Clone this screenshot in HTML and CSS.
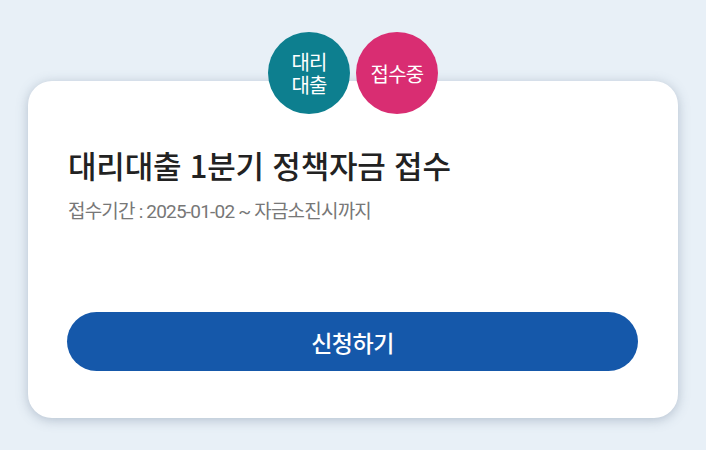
FILE: index.html
```html
<!DOCTYPE html>
<html lang="ko">
<head>
<meta charset="utf-8">
<link rel="stylesheet" href="styles.css">
</head>
<body>
<div class="wrap">
  <div class="card">
    <div class="badges">
      <span class="badge badge-teal">대리<br>대출</span>
      <span class="badge badge-pink">접수중</span>
    </div>
    <h1 class="title">대리대출 1분기 정책자금 접수</h1>
    <p class="period">접수기간 : 2025-01-02 ~ 자금소진시까지</p>
    <button class="apply">신청하기</button>
  </div>
</div>
</body>
</html>
```
FILE: styles.css
```css
html, body {
  margin: 0;
  padding: 0;
  background: #e8f0f7;
  font-family: "Noto Sans CJK KR", "Noto Sans", sans-serif;
}
.wrap {
  padding: 81px 28px 32px;
}
.card {
  position: relative;
  width: 650px;
  height: 337px;
  box-sizing: border-box;
  background: #fff;
  border-radius: 24px;
  box-shadow: 0 2px 12px rgba(80, 100, 130, 0.35);
  padding: 64px 40px 0;
  display: flex;
  flex-direction: column;
}
.badges {
  position: absolute;
  top: -49px;
  left: 0;
  right: 0;
  display: flex;
  justify-content: center;
  gap: 6px;
}
.badge {
  width: 82px;
  height: 82px;
  border-radius: 50%;
  display: flex;
  align-items: center;
  justify-content: center;
  text-align: center;
  color: #fff;
  font-size: 20px;
  line-height: 23px;
  font-weight: 400;
  letter-spacing: -0.8px;
}
.badge-teal { background: #0d7f8f; }
.badge-pink { background: #d92d72; }
.title {
  margin: 0;
  font-size: 31px;
  line-height: 40px;
  font-weight: 500;
  color: #222;
  letter-spacing: -0.2px;
}
.period {
  margin: 15px 0 0;
  font-family: Roboto, "Noto Sans CJK KR", sans-serif;
  font-size: 19px;
  line-height: 24px;
  color: #777;
  letter-spacing: -0.8px;
}
.apply {
  margin-top: 88px;
  width: 571px;
  height: 59px;
  border: 0;
  border-radius: 30px;
  background: #1558aa;
  color: #fff;
  font-family: "Noto Sans CJK KR", "Noto Sans", sans-serif;
  font-size: 23px;
  font-weight: 500;
  letter-spacing: -0.5px;
  margin-left: -1px;
}
```
